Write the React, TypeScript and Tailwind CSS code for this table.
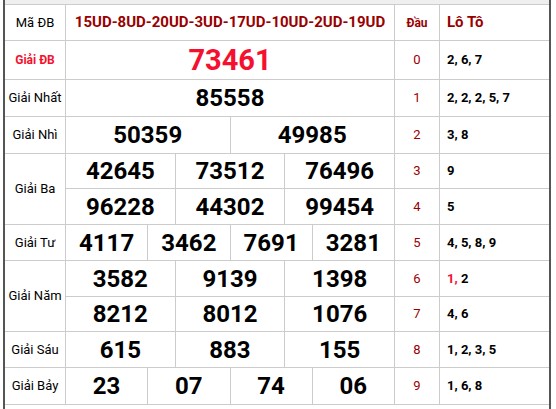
const numRow = (nums: string[], big = false) => {
  const cols =
    nums.length === 1 ? "grid-cols-1" : nums.length === 2 ? "grid-cols-2" : nums.length === 3 ? "grid-cols-3" : "grid-cols-4";
  return (
    <div className={`grid ${cols} gap-px bg-[#cccccc]`}>
      {nums.map((n, i) => (
        <div
          key={i}
          className={`flex items-center justify-center bg-white font-bold leading-none ${
            big ? "text-[29px] text-[#f5102f]" : "text-[24px] text-black"
          }`}
        >
          {n}
        </div>
      ))}
    </div>
  );
};

const heads = [
  { d: "0", l: "2, 6, 7" },
  { d: "1", l: "2, 2, 2, 5, 7" },
  { d: "2", l: "3, 8" },
  { d: "3", l: "9" },
  { d: "4", l: "5" },
  { d: "5", l: "4, 5, 8, 9" },
  { d: "6", l: "", red: "1,", rest: " 2" },
  { d: "7", l: "4, 6" },
  { d: "8", l: "1, 2, 3, 5" },
  { d: "9", l: "1, 6, 8" },
];

const rows = [
  { label: "Giải ĐB", span: 1, nums: [["73461"]], big: true },
  { label: "Giải Nhất", span: 1, nums: [["85558"]] },
  { label: "Giải Nhì", span: 1, nums: [["50359", "49985"]] },
  { label: "Giải Ba", span: 2, nums: [["42645", "73512", "76496"], ["96228", "44302", "99454"]] },
  { label: "Giải Tư", span: 1, nums: [["4117", "3462", "7691", "3281"]] },
  { label: "Giải Năm", span: 2, nums: [["3582", "9139", "1398"], ["8212", "8012", "1076"]] },
  { label: "Giải Sáu", span: 1, nums: [["615", "883", "155"]] },
  { label: "Giải Bảy", span: 1, nums: [["23", "07", "74", "06"]] },
];

export default function App() {
  let headIdx = 0;
  const cells: React.ReactNode[] = [];
  rows.forEach((r, ri) => {
    cells.push(
      <div
        key={`l${ri}`}
        className={`flex items-center justify-center bg-white text-center ${
          r.span === 2 ? "row-span-2" : ""
        } ${r.big ? "text-[12px] font-bold text-[#f5102f]" : "text-[13px] text-black"}`}
      >
        {r.label}
      </div>
    );
    r.nums.forEach((ns, si) => {
      const h = heads[headIdx++];
      cells.push(
        <div key={`n${ri}-${si}`} className="grid bg-[#cccccc]">
          {numRow(ns, r.big)}
        </div>
      );
      cells.push(
        <div key={`d${ri}-${si}`} className="flex items-center justify-center bg-white text-[13px] text-[#990000]">
          {h.d}
        </div>
      );
      cells.push(
        <div key={`t${ri}-${si}`} className="flex items-center bg-white pl-[7px] text-[13px] font-bold text-black">
          <span className="whitespace-pre">
            {h.red ? (
              <>
                <span className="text-[#f5102f]">{h.red}</span>
                {h.rest}
              </>
            ) : (
              h.l
            )}
          </span>
        </div>
      );
    });
  });

  return (
    <div className="h-[409px] w-[556px] overflow-hidden bg-white font-['Roboto',sans-serif]">
      <div className="ml-[3px] h-full w-[548px] border-x-2 border-[#555555]">
        <div className="h-[4px] bg-[#efefef]" />
        <div className="grid grid-cols-[60px_328px_44px_109px] grid-rows-[35px_38px_36px_36px_34px_35px_35px_35px_34px_35px_36px] gap-px bg-[#cccccc] py-px">
          <div className="flex items-center justify-center bg-white text-[13px] text-black">Mã ĐB</div>
          <div className="flex items-center justify-center bg-white text-[15px] font-bold text-[#990000]">
            15UD-8UD-20UD-3UD-17UD-10UD-2UD-19UD
          </div>
          <div className="flex items-center justify-center bg-white text-[12px] font-bold text-[#990000]">Đầu</div>
          <div className="flex items-center bg-white pl-[7px] text-[15px] font-bold text-[#990000]">Lô Tô</div>
          {cells}
        </div>
      </div>
    </div>
  );
}
